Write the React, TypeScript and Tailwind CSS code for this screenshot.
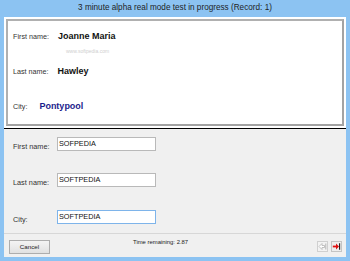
function NavPrev() {
  return (
    <svg width="9" height="9" viewBox="0 0 9 9">
      <polygon
        points="1,4.5 4,1.5 4,3.5 6.5,3.5 6.5,5.5 4,5.5 4,7.5"
        fill="#ffffff"
        stroke="#b4b4b4"
        strokeWidth="0.8"
      />
      <line x1="7.8" y1="1.5" x2="7.8" y2="7.5" stroke="#b4b4b4" strokeWidth="1" />
    </svg>
  );
}

function NavNext() {
  return (
    <svg width="9" height="9" viewBox="0 0 9 9">
      <rect x="0.8" y="3.6" width="3.6" height="1.8" fill="#e01010" />
      <polygon points="4,1.6 7,4.5 4,7.4" fill="#e01010" />
      <line x1="7.6" y1="1.2" x2="7.6" y2="7.8" stroke="#1a1a1a" strokeWidth="1.1" />
    </svg>
  );
}

export default function App() {
  return (
    <div className="w-[350px] h-[261px] bg-[#8cc3f2] flex flex-col px-[4px] pb-[4px] font-['Liberation_Sans',Arial,sans-serif]">
      <div className="h-[17px] flex items-center justify-center text-[8.2px] text-[#1e1e1e]">
        3 minute alpha real mode test in progress (Record: 1)
      </div>

      {/* record being shown */}
      <div className="h-[112px] bg-white p-[2px] border-b border-black">
        <div className="relative h-full border-2 border-[#a3a3a3] border-t-[#b0b0b0] border-l-[#b0b0b0] pt-[9px] pl-[5px] flex flex-col gap-[21px]">
          <div className="absolute left-[58px] top-[27px] text-[5px] text-[#cfcfcf]">
            www.softpedia.com
          </div>
          <div className="relative flex items-center h-[14px]">
            <span className="text-[7.2px] text-[#333]">First name:</span>
            <span className="ml-[9px] text-[9px] font-bold text-[#111]">Joanne Maria</span>
          </div>
          <div className="relative flex items-center h-[14px]">
            <span className="text-[7.2px] text-[#333]">Last name:</span>
            <span className="ml-[9px] text-[9px] font-bold text-[#111]">Hawley</span>
          </div>
          <div className="relative flex items-center h-[14px]">
            <span className="text-[7.2px] text-[#333]">City:</span>
            <span className="ml-[12px] text-[9px] font-bold text-[#1c1c8c]">Pontypool</span>
          </div>
        </div>
      </div>

      {/* typing area */}
      <div className="flex-1 bg-[#f0f0f0] flex flex-col">
        <div className="pt-[8px] pl-[9px]">
          <div className="flex items-start">
            <span className="w-[44px] mt-[5px] leading-[9px] text-[7.3px] text-[#333]">First name:</span>
            <div className="w-[99px] h-[14px] border border-[#b9b9b9] bg-white px-[1px] text-[7.3px] leading-[12px] text-[#111]">
              SOFPEDIA
            </div>
          </div>
          <div className="flex items-start mt-[22px]">
            <span className="w-[44px] mt-[5px] leading-[9px] text-[7.3px] text-[#333]">Last name:</span>
            <div className="w-[99px] h-[14px] border border-[#b9b9b9] bg-white px-[1px] text-[7.3px] leading-[12px] text-[#111]">
              SOFTPEDIA
            </div>
          </div>
          <div className="flex items-start mt-[23px]">
            <span className="w-[44px] mt-[5px] leading-[9px] text-[7.3px] text-[#333]">City:</span>
            <div className="w-[99px] h-[14px] border border-[#7eb4ea] bg-white px-[1px] text-[7.3px] leading-[12px] text-[#111]">
              SOFTPEDIA
            </div>
          </div>
        </div>

        <div className="mt-[9px] flex-1 border-t border-[#d7d7d7] flex items-start">
          <button className="ml-[5px] mt-[6px] w-[41px] h-[14px] border border-[#adadad] bg-gradient-to-b from-[#f4f4f4] to-[#e1e1e1] text-[6.2px] text-[#222] leading-[12px]">
            Cancel
          </button>
          <span className="ml-[83px] mt-[4px] text-[5.9px] leading-[8px] text-[#222]">
            Time remaining: 2.87
          </span>
          <div className="ml-auto mr-[4px] mt-[7px] flex gap-[3px]">
            <div className="w-[11px] h-[11px] border border-[#d0d0d0] bg-[#f3f3f3] flex items-center justify-center">
              <NavPrev />
            </div>
            <div className="w-[11px] h-[11px] border border-[#c4c4c4] bg-[#eeeeee] flex items-center justify-center">
              <NavNext />
            </div>
          </div>
        </div>
      </div>
    </div>
  );
}
